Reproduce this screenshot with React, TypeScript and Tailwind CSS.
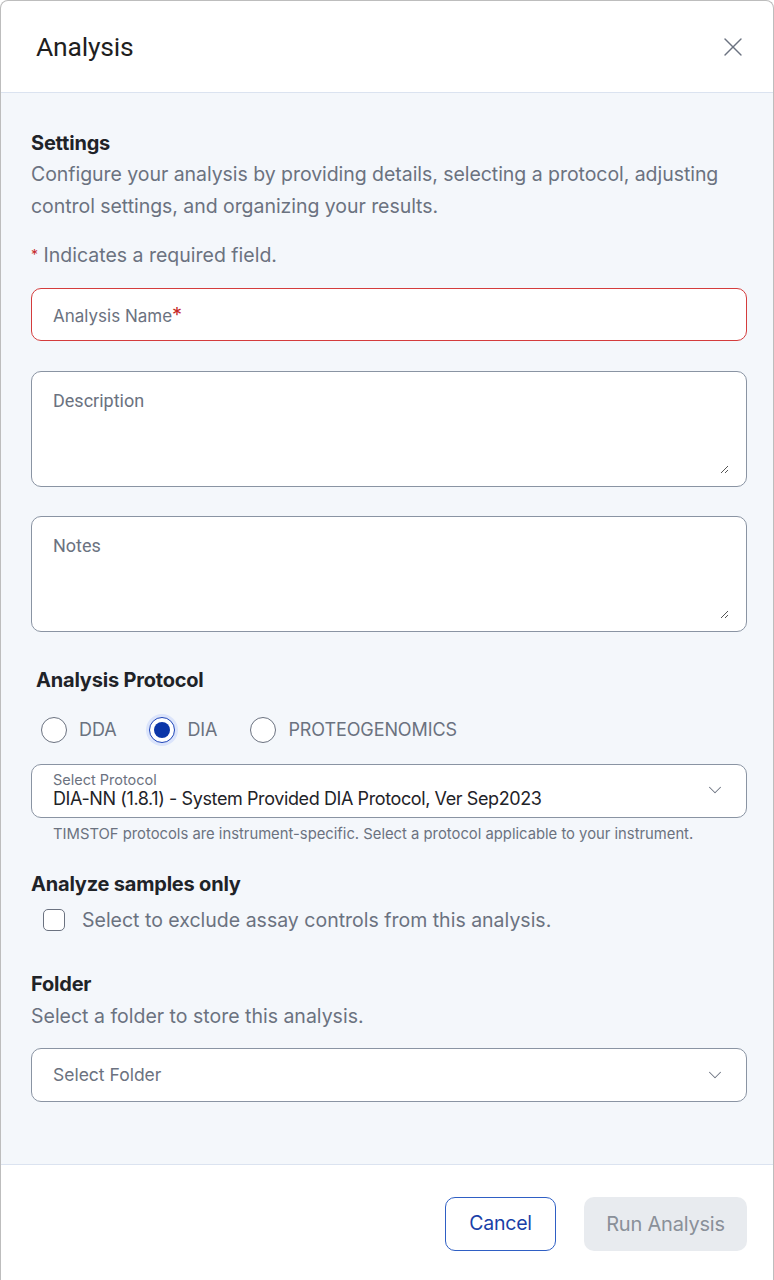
import { X, ChevronDown } from 'lucide-react';

function ResizeGrip() {
  return (
    <svg className="absolute right-[17px] bottom-[12px]" width="10" height="10" viewBox="0 0 10 10">
      <path d="M9 2 L2 9 M9 6 L6 9" stroke="#555" strokeWidth="1" fill="none" />
    </svg>
  );
}

function Radio({ label, checked }: { label: string; checked?: boolean }) {
  return (
    <label className="flex items-center gap-[12px]">
      <span
        className={
          'w-[26px] h-[26px] rounded-full border flex items-center justify-center bg-white ' +
          (checked ? 'border-[#1d44b8] ring-[3px] ring-[#dbe4fb]' : 'border-[#6b7280]')
        }
      >
        {checked && <span className="w-[16px] h-[16px] rounded-full bg-[#0b36a8]" />}
      </span>
      <span className="text-[18px] text-[#6b7280] tracking-[-0.1px]">{label}</span>
    </label>
  );
}

export default function App() {
  return (
    <div className="w-[774px] h-[1280px] flex flex-col bg-white border-t border-x border-[#bdbdbd] rounded-t-[8px] overflow-hidden font-['Inter',sans-serif]">
      <header className="h-[92px] shrink-0 flex items-center justify-between pl-[35px] pr-[24px] border-b border-[#dbe3f0]">
        <h1 className="text-[26.5px] text-[#1f1f1f] font-['Roboto',sans-serif] tracking-[-0.2px]">Analysis</h1>
        <X size={32} strokeWidth={1} className="text-[#6b7280]" />
      </header>

      <main className="flex-1 bg-[#f4f7fb] pl-[30px] pr-[26px] pt-[36px]">
        <h2 className="text-[20px] font-bold text-[#1f2328] tracking-[-0.2px] leading-[28px]">Settings</h2>
        <p className="text-[19.5px] text-[#6b7280] leading-[32px] tracking-[-0.05px] mt-[1px]">
          Configure your analysis by providing details, selecting a protocol, adjusting control settings, and organizing your results.
        </p>
        <p className="mt-[21px] text-[19.5px] text-[#6b7280] leading-[24px]">
          <span className="text-[#c62828] text-[14px] align-top">*</span> Indicates a required field.
        </p>

        <div className="mt-[21px] h-[53px] rounded-[10px] border border-[#d43c3c] bg-white flex items-center px-[21px]">
          <span className="text-[17px] text-[#6b7280]">
            Analysis Name<span className="text-[#c62828] text-[20px]">*</span>
          </span>
        </div>

        <div className="relative mt-[30px] h-[116px] rounded-[10px] border border-[#8a94a3] bg-white px-[21px] pt-[15px]">
          <span className="text-[18px] text-[#6b7280] font-['Roboto',sans-serif]">Description</span>
          <ResizeGrip />
        </div>

        <div className="relative mt-[29px] h-[116px] rounded-[10px] border border-[#8a94a3] bg-white px-[21px] pt-[15px]">
          <span className="text-[18px] text-[#6b7280] font-['Roboto',sans-serif]">Notes</span>
          <ResizeGrip />
        </div>

        <h2 className="mt-[34px] ml-[5px] text-[20px] font-bold text-[#1f2328] tracking-[-0.2px] leading-[28px]">Analysis Protocol</h2>

        <div className="mt-[22px] ml-[10px] flex items-center gap-[33px]">
          <Radio label="DDA" />
          <Radio label="DIA" checked />
          <Radio label="PROTEOGENOMICS" />
        </div>

        <div className="mt-[21px] h-[54px] rounded-[10px] border border-[#8a94a3] bg-white flex items-center justify-between pl-[21px] pr-[20px]">
          <div className="flex flex-col">
            <span className="text-[14.5px] text-[#6b7280] leading-[16px]">Select Protocol</span>
            <span className="text-[18px] text-[#1f2328] leading-[22px] tracking-[-0.4px]">
              DIA-NN (1.8.1) - System Provided DIA Protocol, Ver Sep2023
            </span>
          </div>
          <ChevronDown size={22} strokeWidth={1.1} className="text-[#6b7280] -mt-[2px]" />
        </div>
        <p className="mt-[7px] pl-[22px] text-[14.8px] text-[#6b7280] leading-[18px]">
          TIMSTOF protocols are instrument-specific. Select a protocol applicable to your instrument.
        </p>

        <h2 className="mt-[27px] text-[20px] font-bold text-[#1f2328] tracking-[-0.2px] leading-[28px]">Analyze samples only</h2>
        <label className="mt-[9px] ml-[12px] flex items-center gap-[17px]">
          <span className="w-[22px] h-[22px] rounded-[5px] border border-[#6b7280] bg-white" />
          <span className="text-[19.5px] text-[#6b7280] leading-[26px]">
            Select to exclude assay controls from this analysis.
          </span>
        </label>

        <h2 className="mt-[37px] text-[20px] font-bold text-[#1f2328] tracking-[-0.2px] leading-[28px]">Folder</h2>
        <p className="mt-[5px] text-[19.5px] text-[#6b7280] leading-[26px]">Select a folder to store this analysis.</p>

        <div className="mt-[19px] h-[54px] rounded-[10px] border border-[#8a94a3] bg-white flex items-center justify-between pl-[21px] pr-[20px]">
          <span className="text-[17.5px] text-[#6b7280]">Select Folder</span>
          <ChevronDown size={22} strokeWidth={1.1} className="text-[#6b7280]" />
        </div>
      </main>

      <footer className="h-[116px] shrink-0 border-t border-[#dbe3f0] bg-white flex items-start justify-end gap-[28px] pr-[26px] pt-[32px]">
        <button className="w-[111px] h-[54px] rounded-[10px] border border-[#2f5fc4] text-[#1a3fa8] text-[19.5px] tracking-[-0.2px]">
          Cancel
        </button>
        <button className="w-[163px] h-[54px] rounded-[10px] bg-[#e8ebef] text-[#8a9099] text-[20px] tracking-[-0.2px]">
          Run Analysis
        </button>
      </footer>
    </div>
  );
}
